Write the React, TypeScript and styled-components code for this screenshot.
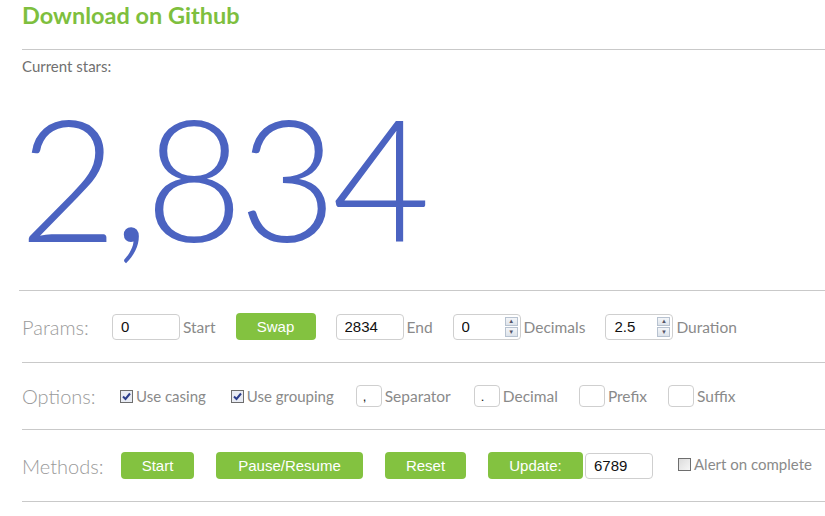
import React, { useState } from "react";
import styled, { createGlobalStyle } from "styled-components";

const GlobalStyle = createGlobalStyle`
	body {
		margin: 0;
		background: #fff;
		font-family: "Lato", "Open Sans", sans-serif;
	}
`;

const Page = styled.div`
	padding-left: 22px;
	overflow: hidden;
	width: 803px;
`;

const Title = styled.h2`
	margin: 0;
	padding-top: 0;
	font-size: 23.5px;
	line-height: 30px;
	font-weight: 700;
	color: #7ebf3e;
	border-bottom: 1px solid #c9c9c9;
	box-sizing: border-box;
	height: 50px;
`;

const StarsLabel = styled.div`
	margin-top: 9px;
	font-size: 15px;
	line-height: 15px;
	color: #707070;
`;

const BigNumber = styled.div`
	font-family: "Lato", sans-serif;
	font-weight: 300;
	font-size: 170px;
	line-height: normal;
	color: #4b63c1;
	height: 217px;
	margin-left: -3px;
	letter-spacing: -5px;
	border-bottom: 1px solid #c9c9c9;
	box-sizing: border-box;
`;

const Row = styled.div<{ $height: number }>`
	display: flex;
	align-items: center;
	height: ${(p) => p.$height}px;
	border-bottom: 1px solid #c9c9c9;
	box-sizing: border-box;
`;

const RowLabel = styled.div<{ $width: number }>`
	width: ${(p) => p.$width}px;
	flex-shrink: 0;
	font-size: 20px;
	font-weight: 300;
	color: #9a9a9a;
`;

const Group = styled.div<{ $gap?: number }>`
	display: flex;
	align-items: center;
	margin-right: ${(p) => p.$gap ?? 20}px;
	flex-shrink: 0;
`;

const FieldLabel = styled.span`
	margin-left: 3px;
	font-size: 15.5px;
	color: #8a8a8a;
`;

const TextInput = styled.input<{ $width: number }>`
	width: ${(p) => p.$width}px;
	height: 26px;
	box-sizing: border-box;
	border: 1px solid #cfcfcf;
	border-radius: 4px;
	padding: 0 0 0 8px;
	font-family: "Liberation Sans", Arial, sans-serif;
	font-size: 15px;
	color: #111;
	outline: none;
`;

const SmallInput = styled(TextInput)`
	height: 22px;
	font-size: 13px;
	padding-left: 6px;
`;

const SpinBox = styled.div`
	display: flex;
	align-items: center;
	width: 68px;
	height: 26px;
	box-sizing: border-box;
	border: 1px solid #cfcfcf;
	border-radius: 4px;
	padding: 0 2px 0 8px;
`;

const SpinField = styled.input`
	flex: 1;
	min-width: 0;
	border: none;
	outline: none;
	padding: 0;
	font-family: "Liberation Sans", Arial, sans-serif;
	font-size: 15px;
	color: #111;
`;

const Spinner = styled.div`
	display: flex;
	flex-direction: column;
	width: 13px;
	height: 20px;
	gap: 1px;
`;

const SpinArrow = styled.div`
	flex: 1;
	display: flex;
	align-items: center;
	justify-content: center;
	border: 1px solid #b7c2d0;
	background: linear-gradient(#f4f6f9, #dde3ea);
	font-size: 6px;
	line-height: 1;
	color: #556;
`;

const GreenButton = styled.button<{ $width: number }>`
	width: ${(p) => p.$width}px;
	height: 27px;
	border: none;
	border-radius: 4px;
	background: #83c240;
	color: #fff;
	font-family: "Liberation Sans", Arial, sans-serif;
	font-size: 15px;
	padding: 0;
	cursor: pointer;
`;

const CheckLabel = styled.label`
	display: flex;
	align-items: center;
	font-size: 15px;
	color: #8a8a8a;
	cursor: pointer;
`;

const Box = styled.span<{ $checked: boolean }>`
	width: 11px;
	height: 11px;
	margin-right: 3px;
	border: 1px solid #6e6e6e;
	background: ${(p) => (p.$checked ? "#e9ecf4" : "linear-gradient(135deg, #dcdcdc, #f6f6f6)")};
	display: flex;
	align-items: center;
	justify-content: center;
	box-sizing: content-box;
`;

const AlertGroup = styled(Group)`
	align-self: flex-start;
	margin-top: 25px;
`;

const Spin = ({ value }: { value: string }) => (
	<SpinBox>
		<SpinField defaultValue={value} />
		<Spinner>
			<SpinArrow>▲</SpinArrow>
			<SpinArrow>▼</SpinArrow>
		</Spinner>
	</SpinBox>
);

const Check = ({ label, initial }: { label: string; initial: boolean }) => {
	const [checked, setChecked] = useState(initial);
	return (
		<CheckLabel onClick={() => setChecked(!checked)}>
			<Box $checked={checked}>
				{checked && (
					<svg width="9" height="9" viewBox="0 0 9 9">
						<path d="M1 4.5 L3.5 7 L8 1.5" stroke="#2c3e8c" strokeWidth="2" fill="none" />
					</svg>
				)}
			</Box>
			{label}
		</CheckLabel>
	);
};

const App = () => {
	return (
		<Page>
			<GlobalStyle />
			<Title>Download on Github</Title>
			<StarsLabel>Current stars:</StarsLabel>
			<BigNumber>2,834</BigNumber>

			<Row $height={72}>
				<RowLabel $width={90}>Params:</RowLabel>
				<Group>
					<TextInput $width={68} defaultValue="0" />
					<FieldLabel>Start</FieldLabel>
				</Group>
				<Group>
					<GreenButton $width={80}>Swap</GreenButton>
				</Group>
				<Group>
					<TextInput $width={68} defaultValue="2834" />
					<FieldLabel>End</FieldLabel>
				</Group>
				<Group>
					<Spin value="0" />
					<FieldLabel>Decimals</FieldLabel>
				</Group>
				<Group>
					<Spin value="2.5" />
					<FieldLabel>Duration</FieldLabel>
				</Group>
			</Row>

			<Row $height={67}>
				<RowLabel $width={98}>Options:</RowLabel>
				<Group $gap={25}>
					<Check label="Use casing" initial={true} />
				</Group>
				<Group $gap={22}>
					<Check label="Use grouping" initial={true} />
				</Group>
				<Group $gap={23}>
					<SmallInput $width={26} defaultValue="," />
					<FieldLabel>Separator</FieldLabel>
				</Group>
				<Group $gap={21}>
					<SmallInput $width={26} defaultValue="." />
					<FieldLabel>Decimal</FieldLabel>
				</Group>
				<Group $gap={21}>
					<SmallInput $width={26} defaultValue="" />
					<FieldLabel>Prefix</FieldLabel>
				</Group>
				<Group>
					<SmallInput $width={26} defaultValue="" />
					<FieldLabel>Suffix</FieldLabel>
				</Group>
			</Row>

			<Row $height={72}>
				<RowLabel $width={99}>Methods:</RowLabel>
				<Group $gap={22}>
					<GreenButton $width={73}>Start</GreenButton>
				</Group>
				<Group $gap={22}>
					<GreenButton $width={147}>Pause/Resume</GreenButton>
				</Group>
				<Group $gap={22}>
					<GreenButton $width={81}>Reset</GreenButton>
				</Group>
				<Group $gap={25}>
					<GreenButton $width={95}>Update:</GreenButton>
					<TextInput $width={68} defaultValue="6789" style={{ marginLeft: 2 }} />
				</Group>
				<AlertGroup>
					<Check label="Alert on complete" initial={false} />
				</AlertGroup>
			</Row>
		</Page>
	);
};

export default App;
